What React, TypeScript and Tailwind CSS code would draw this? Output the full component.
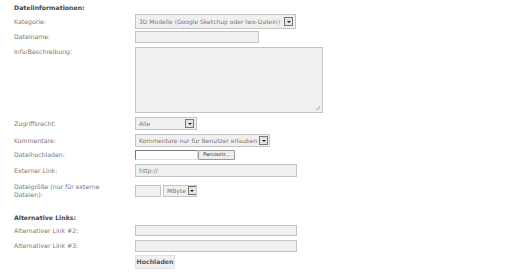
import React from "react";

function Arrow() {
  return (
    <span className="ml-auto flex h-[9px] w-[9px] shrink-0 items-center justify-center border border-[#777] bg-[#e4e4e4]">
      <span className="block h-0 w-0 border-x-[2px] border-t-[2px] border-x-transparent border-t-[#222]" />
    </span>
  );
}

function Select({ text, w, h }: { text: string; w: string; h: string }) {
  return (
    <div className={`flex items-center overflow-hidden border border-[#c4c4c4] bg-[#f0f0f0] pl-[3px] pr-[2px] text-[6px] text-[#7a7a7a] ${w} ${h}`}>
      <span className="mr-[2px] whitespace-nowrap">{text}</span>
      <Arrow />
    </div>
  );
}

function Input({ w, h, value }: { w: string; h: string; value?: string }) {
  return (
    <div className={`flex items-center border border-[#c4c4c4] bg-[#f0f0f0] pl-[3px] text-[#7a7a7a] ${w} ${h}`}>
      {value}
    </div>
  );
}

function Row({ label, children, className = "items-center", lclass = "" }: { label: string; children: React.ReactNode; className?: string; lclass?: string }) {
  return (
    <div className={`flex ${className}`}>
      <div className={`w-[121px] shrink-0 leading-[7.5px] text-[#777] ${lclass}`}>{label}</div>
      {children}
    </div>
  );
}

export default function App() {
  return (
    <main className="h-[277px] w-[512px] bg-white pl-[14px] pt-[4px] text-[6.2px] [font-family:'DejaVu_Sans',sans-serif]">
      <h2 className="h-[8px] font-bold leading-[8px] text-[#444]">Dateiinformationen:</h2>
      <div className="mt-[2px] flex flex-col">
        <Row label="Kategorie:">
          <Select text="3D Modelle (Google Sketchup oder lwo-Datein)" w="w-[161px]" h="h-[15px]" />
        </Row>
        <div className="mt-[2px]">
          <Row label="Dateiname:">
            <Input w="w-[124px]" h="h-[12px]" />
          </Row>
        </div>
        <div className="mt-[4px]">
          <Row label="Info/Beschreibung:" className="items-start" lclass="pt-[1px]">
            <div className="relative h-[66px] w-[188px] border border-[#c4c4c4] bg-[#f0f0f0]">
              <svg className="absolute bottom-[1px] right-[1px]" width="6" height="6" viewBox="0 0 6 6">
                <path d="M5 1 L1 5 M5 3 L3 5" stroke="#aaa" strokeWidth="0.8" />
              </svg>
            </div>
          </Row>
        </div>
        <div className="mt-[4px]">
          <Row label="Zugriffsrecht:">
            <Select text="Alle" w="w-[62px]" h="h-[13px]" />
          </Row>
        </div>
        <div className="mt-[4px]">
          <Row label="Kommentare:">
            <Select text="Kommentare nur für Benutzer erlauben" w="w-[135px]" h="h-[13px]" />
          </Row>
        </div>
        <div className="mt-[3px]">
          <Row label="Dateihochladen:">
            <div className="flex items-center">
              <div className="h-[10px] w-[63px] border border-[#777] border-r-[#ddd] border-b-[#ddd] bg-white" />
              <div className="flex h-[10px] w-[37px] items-center justify-center rounded-[1px] border border-[#999] bg-[#eee] text-[5px] text-[#222]">
                Parcourir...
              </div>
            </div>
          </Row>
        </div>
        <div className="mt-[4px]">
          <Row label="Externer Link:">
            <Input w="w-[162px]" h="h-[13px]" value="http://" />
          </Row>
        </div>
        <div className="mt-[6px]">
          <Row label="Dateigröße (nur für externe Dateien):" lclass="pr-[18px]">
            <div className="flex items-center gap-[2px]">
              <Input w="w-[26px]" h="h-[12px]" />
              <Select text="MByte" w="w-[34px]" h="h-[12px]" />
            </div>
          </Row>
        </div>
      </div>
      <h2 className="mt-[16px] h-[8px] font-bold leading-[8px] text-[#444]">Alternative Links:</h2>
      <div className="mt-[3px] flex flex-col">
        <Row label="Alternativer Link #2:">
          <Input w="w-[162px]" h="h-[11px]" />
        </Row>
        <div className="mt-[4px]">
          <Row label="Alternativer Link #3:">
            <Input w="w-[162px]" h="h-[12px]" />
          </Row>
        </div>
        <div className="mt-[3px] flex">
          <div className="w-[121px] shrink-0" />
          <div className="flex h-[14px] w-[40px] items-center justify-center border border-[#e0e0e0] bg-[#f0f0f0] font-bold text-[#555]">
            Hochladen
          </div>
        </div>
      </div>
    </main>
  );
}
